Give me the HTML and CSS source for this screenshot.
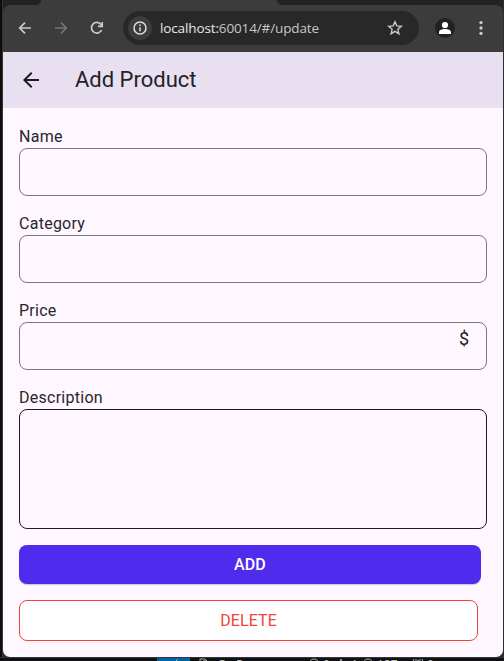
FILE: index.html
```html
<!DOCTYPE html>
<html lang="en">
<head>
<meta charset="utf-8">
<title>Add Product</title>
<link rel="stylesheet" href="styles.css">
</head>
<body>
<div class="window">
  <div class="tabs"><div class="tab-left"></div><div class="tab-right"></div></div>
  <div class="toolbar">
    <svg class="nav" viewBox="0 0 16 16"><path d="M14 8H3M8 2.7 2.7 8 8 13.3"/></svg>
    <svg class="nav forward" viewBox="0 0 16 16"><path d="M2 8h11M8 2.7 13.3 8 8 13.3"/></svg>
    <svg class="nav reload" viewBox="0 0 16 16"><path d="M12.6 10A5.3 5.3 0 1 1 12 4.5L13.2 6M13.2 2v4.3H9"/></svg>
    <div class="address">
      <span class="info"><svg viewBox="0 0 16 16"><circle cx="8" cy="8" r="6"/><path d="M8 7.2v4M8 4.6v1.5"/></svg></span>
      <span class="url"><b>localhost:</b>60014/#/update</span>
      <svg class="star" viewBox="0 0 16 16"><path d="m8 1.8 1.8 4.1 4.5.4-3.4 3 1 4.4L8 11.4l-3.9 2.3 1-4.4-3.4-3 4.5-.4z"/></svg>
    </div>
    <svg class="profile" viewBox="0 0 20 20"><circle cx="10" cy="10" r="10" fill="#202221"/><circle cx="10" cy="7" r="3.1" fill="#fff"/><path d="M4 16v-1.8C4 12 7 11 10 11s6 1 6 3.2V16z" fill="#fff"/></svg>
    <svg class="more" viewBox="0 0 4 16"><circle cx="2" cy="2.6" r="1.7"/><circle cx="2" cy="8" r="1.7"/><circle cx="2" cy="13.4" r="1.7"/></svg>
  </div>
  <header class="appbar">
    <svg viewBox="0 0 24 24"><path d="M20 11H7.83l5.59-5.59L12 4l-8 8 8 8 1.41-1.41L7.83 13H20z"/></svg>
    <h1>Add Product</h1>
  </header>
  <main class="form">
    <div class="field"><label>Name</label><div class="input"></div></div>
    <div class="field"><label>Category</label><div class="input"></div></div>
    <div class="field"><label>Price</label><div class="input"><span>$</span></div></div>
    <div class="field"><label>Description</label><div class="input area"></div></div>
    <button class="add">ADD</button>
    <button class="delete">DELETE</button>
  </main>
</div>
<footer class="status">
  <div class="remote"><svg viewBox="0 0 12 12"><path d="m8 1-5 5 5 5"/></svg></div>
  <svg class="files" viewBox="0 0 12 12"><path d="M1 9V1h5l3 3M4 3h4l3 3v5H4z"/></svg>
  <span class="project">Go Run</span>
  <svg class="problem" viewBox="0 0 12 12"><circle cx="6" cy="6" r="5"/></svg><span class="count">0</span>
  <svg class="problem" viewBox="0 0 12 12"><path d="m6 1 5 10H1z"/></svg><span class="count">4</span>
  <svg class="problem" viewBox="0 0 12 12"><circle cx="6" cy="6" r="5"/></svg><span class="total">127</span>
  <svg class="problem" viewBox="0 0 12 12"><path d="M2 1q-2 3 0 6M10 1q2 3 0 6M6 2 3 11M6 2l3 9M4 1v4M8 1v4"/></svg><span class="count">0</span>
</footer>
</body>
</html>
```
FILE: styles.css
```css
* { box-sizing: border-box; }
body {
  margin: 0;
  width: 504px;
  height: 661px;
  overflow: hidden;
  background: linear-gradient(90deg, #0d0d0e 0 2px, #343436 2px 3px, #2d2c2f 3px);
  font-family: Roboto, sans-serif;
}
.window {
  display: flex;
  flex-direction: column;
  width: 500px;
  height: 657px;
  margin-left: 3px;
  background: #202321;
  border-radius: 0 0 7px 7px;
  overflow: hidden;
}
.tabs { display: flex; justify-content: space-between; height: 5px; background: #3c3c3c; }
.tab-left { width: 38px; background: #202321; border-radius: 0 0 7px 0; }
.tab-right { width: 226px; background: #202321; border-radius: 0 0 0 7px; }
.toolbar {
  display: flex;
  align-items: center;
  height: 47px;
  padding: 0 20px 1px 14px;
  background: #3c3c3c;
  border-radius: 7px 7px 0 0;
}
.toolbar svg { flex: none; }
.nav { width: 16px; height: 16px; margin-right: 20px; fill: none; stroke: #c9cac9; stroke-width: 1.7; }
.nav.forward { stroke: #757575; }
.nav.reload { margin-right: 18px; }
.address {
  display: flex;
  align-items: center;
  flex: none;
  width: 296px;
  height: 34px;
  padding: 0 16px 0 5px;
  border-radius: 17px;
  background: #282828;
}
.info { display: grid; place-items: center; width: 24px; height: 24px; border-radius: 50%; background: #3c3c3c; }
.info svg { width: 16px; height: 16px; fill: none; stroke: #dedede; stroke-width: 1.5; }
.url { flex: 1; margin-left: 8px; color: #c7c7c7; font: 13.5px/20px "Open Sans", sans-serif; letter-spacing: -0.13px; white-space: nowrap; }
.url b { font-weight: 400; color: #e8e8e8; }
.star { width: 16px; height: 16px; fill: none; stroke: #c9cac9; stroke-width: 1.4; }
.profile { width: 20px; height: 20px; margin-left: 16px; }
.more { width: 4px; height: 16px; margin-left: 24px; fill: #c9cac9; }
.appbar { display: flex; align-items: center; flex: none; height: 56px; padding-left: 16px; background: #e8dff0; }
.appbar svg { width: 24px; height: 24px; fill: #1d1b20; }
.appbar h1 { margin: 0 0 0 32px; font-size: 22px; font-weight: 400; line-height: 28px; color: #242127; }
.form { display: flex; flex-direction: column; flex: 1; padding: 16px; background: #fef7ff; }
.field { margin-bottom: 15px; }
.field label { display: block; height: 24px; padding-top: 1px; font-size: 16px; line-height: 24px; letter-spacing: .26px; color: #29262c; }
.input { width: 468px; height: 48px; padding: 4px 17px; border: 1px solid #7b757f; border-radius: 8px; text-align: right; font-size: 18px; line-height: 24px; color: #1d1b20; }
.input.area { height: 120px; border-color: #1d1b20; margin-bottom: 1px; }
button { flex: none; padding: 0; border-radius: 8px; font: 500 16px/24px Roboto, sans-serif; letter-spacing: .1px; }
.add { width: 462px; height: 39px; border: 0; background: #4f2bee; color: #fff; box-shadow: 0 1px 1px #cdc5d8; }
.delete { width: 459px; height: 41px; margin-top: 16px; border: 1px solid #f44336; background: #fff; color: #f44336; font-weight: 400; }
.status { display: flex; height: 4px; padding-left: 157px; overflow: hidden; border-top: 1px solid #343336; background: #101112; color: #bbb; font: 12px/14px "Open Sans", sans-serif; }
.status svg { flex: none; width: 12px; height: 12px; fill: none; stroke: #aaa; stroke-width: 1; }
.remote { width: 33px; height: 12px; padding-left: 13px; background: #0060a8; }
.files { margin-left: 9px; }
.project { width: 91px; margin-left: 6px; white-space: nowrap; }
.count { width: 15px; padding-left: 3px; }
.total { width: 38px; padding-left: 3px; }
```
